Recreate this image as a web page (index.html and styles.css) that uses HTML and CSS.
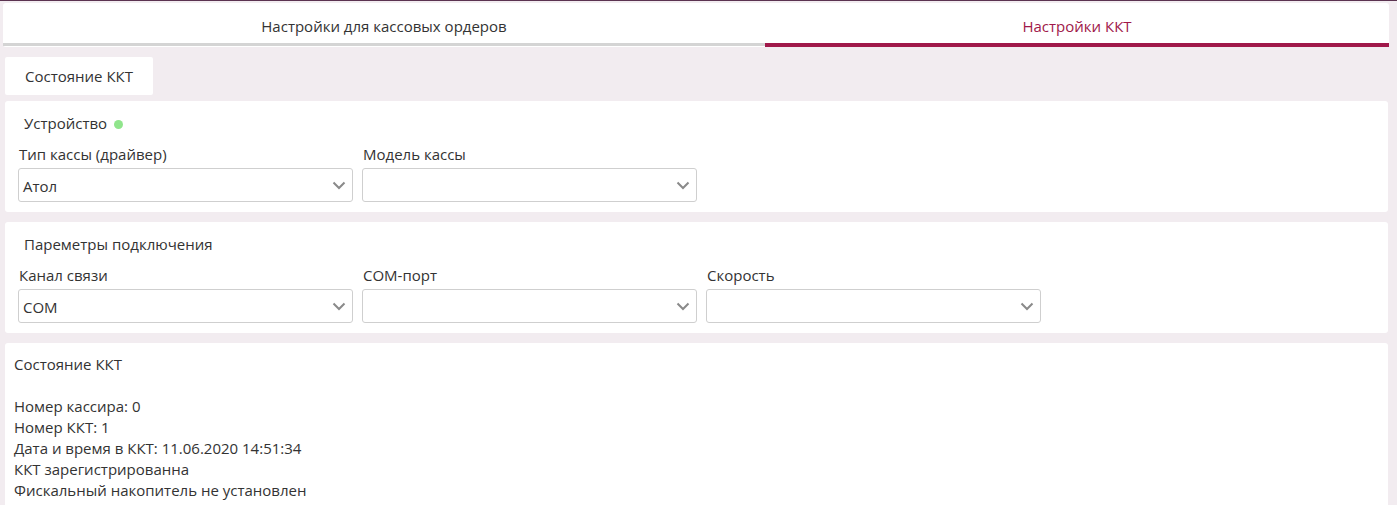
FILE: index.html
```html
<!DOCTYPE html>
<html lang="ru">
<head>
  <meta charset="UTF-8" />
  <title>Настройки ККТ</title>
  <link rel="stylesheet" href="styles.css">
</head>
<body>

<div class="tabs">
  <div class="tab tab-wide">Настройки для кассовых ордеров</div>
  <div class="tab active">Настройки ККТ</div>
</div>

<div class="content">
  <div class="btn-state">Состояние ККТ</div>

  <div class="card">
    <div class="card-title">Устройство <span class="dot"></span></div>
    <div class="fields">
      <div class="field">
        <label>Тип кассы (драйвер)</label>
        <div class="select"><span>Атол</span>
          <svg width="14" height="9" viewBox="0 0 14 9"><path d="M1.5 1.5 L7 7 L12.5 1.5" fill="none" stroke="#8a8a8a" stroke-width="2"/></svg>
        </div>
      </div>
      <div class="field">
        <label>Модель кассы</label>
        <div class="select"><span></span>
          <svg width="14" height="9" viewBox="0 0 14 9"><path d="M1.5 1.5 L7 7 L12.5 1.5" fill="none" stroke="#8a8a8a" stroke-width="2"/></svg>
        </div>
      </div>
    </div>
  </div>

  <div class="card">
    <div class="card-title">Пареметры подключения</div>
    <div class="fields">
      <div class="field">
        <label>Канал связи</label>
        <div class="select"><span>COM</span>
          <svg width="14" height="9" viewBox="0 0 14 9"><path d="M1.5 1.5 L7 7 L12.5 1.5" fill="none" stroke="#8a8a8a" stroke-width="2"/></svg>
        </div>
      </div>
      <div class="field">
        <label>COM-порт</label>
        <div class="select"><span></span>
          <svg width="14" height="9" viewBox="0 0 14 9"><path d="M1.5 1.5 L7 7 L12.5 1.5" fill="none" stroke="#8a8a8a" stroke-width="2"/></svg>
        </div>
      </div>
      <div class="field">
        <label>Скорость</label>
        <div class="select"><span></span>
          <svg width="14" height="9" viewBox="0 0 14 9"><path d="M1.5 1.5 L7 7 L12.5 1.5" fill="none" stroke="#8a8a8a" stroke-width="2"/></svg>
        </div>
      </div>
    </div>
  </div>

  <div class="card status">
    <p>Состояние ККТ</p>
    <p>&nbsp;</p>
    <p>Номер кассира: 0</p>
    <p>Номер ККТ: 1</p>
    <p>Дата и время в ККТ: 11.06.2020 14:51:34</p>
    <p>ККТ зарегистрированна</p>
    <p>Фискальный накопитель не установлен</p>
  </div>
</div>

</body>
</html>
```

FILE: styles.css
```css
body {
  margin: 0;
  font-family: "Open Sans", "Noto Sans", sans-serif;
  font-size: 15px;
  color: #333;
  background: #f2ecf0;
  border-top: 1px solid #5b3350;
}
.tabs {
  display: flex;
  margin: 2px 8px 0 3px;
  background: white;
  border-radius: 3px;
}
.tab {
  flex: 1;
  height: 40px;
  line-height: 46px;
  text-align: center;
  border-bottom: 3px solid #d4d4d4;
}
.tab-wide {
  flex: 0 0 762px;
}
.tab.active {
  color: #a0184a;
  border-bottom: 4px solid #a0184a;
  height: 40px;
}
.content {
  padding: 10px 9px 0 5px;
}
.btn-state {
  display: inline-block;
  background: white;
  padding: 0 20px;
  width: 108px;
  height: 38px;
  line-height: 38px;
  border-radius: 2px;
  margin-bottom: 6px;
}
.card {
  background: white;
  border-radius: 3px;
  padding: 11px 13px 10px;
  margin-bottom: 10px;
}
.card-title {
  padding-left: 6px;
  height: 22px;
  line-height: 22px;
}
.dot {
  display: inline-block;
  width: 9px;
  height: 9px;
  border-radius: 50%;
  background: #90e58c;
  margin-left: 3px;
  vertical-align: 0;
}
.fields {
  display: flex;
  gap: 9px;
  margin-top: 9px;
}
.field {
  width: 335px;
}
.field label {
  display: block;
  height: 25px;
  line-height: 22px;
  padding-left: 1px;
}
.select {
  display: flex;
  align-items: center;
  justify-content: space-between;
  height: 32px;
  border: 1px solid #cfcfcf;
  border-radius: 3px;
  padding: 0 6px 0 4px;
}
.select span {
  padding-top: 2px;
}
.status {
  padding: 11px 9px 0;
  margin-bottom: 0;
  min-height: 160px;
}
.status p {
  margin: 0;
  line-height: 21px;
}
```
